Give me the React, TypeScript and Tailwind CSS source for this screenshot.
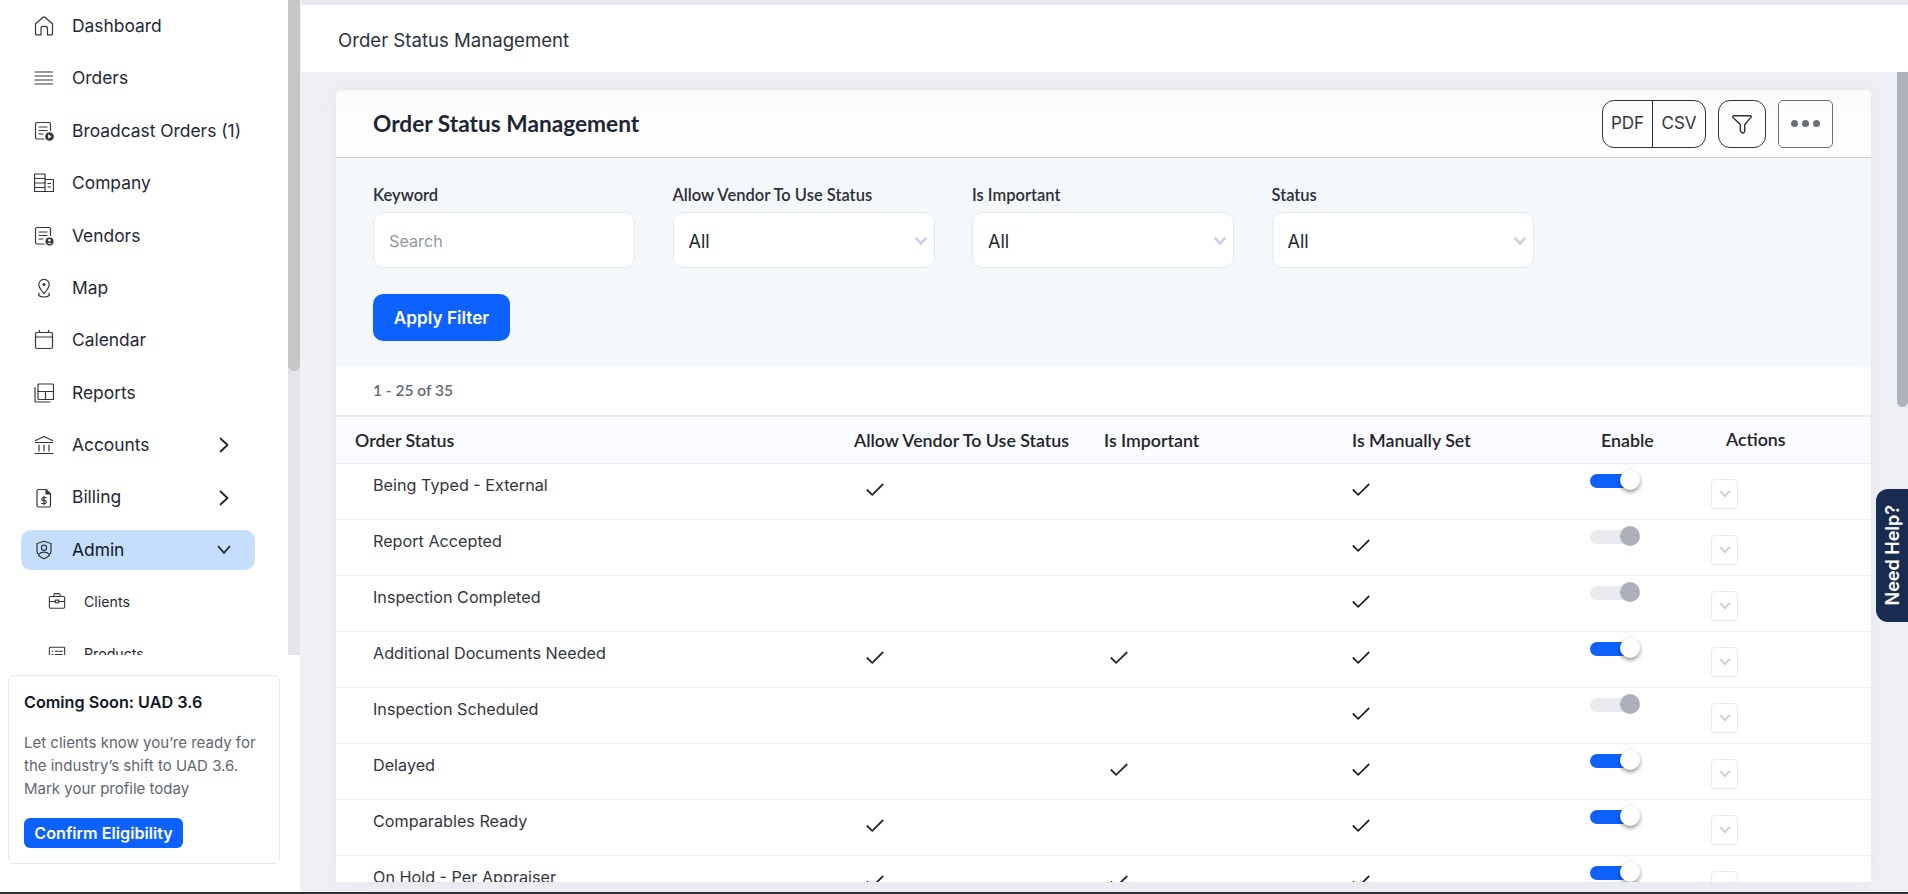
import type { ReactNode } from 'react';

const stroke = {
    fill: 'none',
    stroke: '#33363e',
    strokeWidth: 1.2,
    strokeLinecap: 'round' as const,
    strokeLinejoin: 'round' as const,
};

function NavIcon({ children, small }: { children: ReactNode; small?: boolean }) {
    return (
        <svg viewBox="0 0 20 20" className={small ? 'w-[18px] h-[18px] shrink-0' : 'w-5 h-5 shrink-0'} {...stroke}>
            {children}
        </svg>
    );
}

const icons: Record<string, ReactNode> = {
    dashboard: (
        <path d="M1.5 8 9 1.2c.6-.5 1.400-.5 2 0L18.500 8v10a.8.800 0 0 1-.8.800h-4.200v-6.300a2.200 2.200 0 0 0-2.200-2.200H9.200A2.200 2.200 0 0 0 7 12.500v6.300H2.300a.8.800 0 0 1-.8-.8z" />
    ),
    orders: <path d="M1 4h17.500M1 8h17.500M1 12h17.500M1 16h17.500" />,
    broadcast: (
        <>
            <path d="M10 18H3a1.500 1.500 0 0 1-1.500-1.500V3A1.500 1.500 0 0 1 3 1.500h12A1.500 1.500 0 0 1 16.500 3v6.500" />
            <path d="M5 6h8M5 9.500h8M5 13h4" />
            <circle cx="15.500" cy="15.500" r="4.300" fill="#33363e" stroke="none" />
            <path d="m14.200 13.300 3.400 2.200-3.400 2.200z" fill="#fff" stroke="none" />
        </>
    ),
    company: (
        <>
            <path d="M.5 1h10.500v17.500H.5zM11 6.500h8.500v12H11z" />
            <path d="M.5 5.500H11M.5 10H11M.5 14.500H11M14 10.500h2.500M14 14h2.500" />
        </>
    ),
    vendors: (
        <>
            <path d="M10 18H3a1.500 1.500 0 0 1-1.500-1.500V3A1.500 1.500 0 0 1 3 1.500h12A1.500 1.500 0 0 1 16.500 3v6.500" />
            <path d="M5 6h8M5 9.500h8M5 13h4" />
            <circle cx="15.500" cy="15.500" r="4" fill="#33363e" stroke="none" />
            <circle cx="15.500" cy="14.300" r="1.300" fill="#fff" stroke="none" />
            <path d="M13 17.800c.5-1.500 4.500-1.500 5 0z" fill="#fff" stroke="none" />
        </>
    ),
    map: (
        <>
            <path d="M10 15.500c-1.800-2.200-5.200-5.500-5.200-9a5.200 5.200 0 0 1 10.400 0c0 3.500-3.400 6.800-5.200 9z" />
            <circle cx="10" cy="6.500" r=".9" fill="#33363e" />
            <path d="M5.200 15.500c-1.600 1.500-.2 3.500 4.800 3.500s6.400-2 4.800-3.500" />
        </>
    ),
    calendar: (
        <>
            <rect x="1.500" y="2.500" width="17" height="16" rx="1.500" />
            <path d="M1.500 7h17M5.500.5v2M14.500.5v2" />
        </>
    ),
    reports: (
        <>
            <rect x="4" y="1" width="15.500" height="15.500" rx="1" />
            <path d="M4 8.500h15.500M11.500 8.500v8" />
            <path d="M1 4.500V18a1 1 0 0 0 1 1h14" />
        </>
    ),
    accounts: <path d="m1.500 5.500 8.500-4 8.500 4M1.500 7.500h17M5 10v6M10 10v6M15 10v6M1 18.500h18" />,
    billing: (
        <>
            <path d="M3 3a1.500 1.500 0 0 1 1.500-1.500h7.500l4.500 4.500v11.500a1.500 1.500 0 0 1-1.500 1.500h-10.500a1.500 1.500 0 0 1-1.500-1.500z" />
            <path d="M12 1.500V6h4.500" fill="#33363e" />
            <path d="M12.200 9.500H9.400a1.500 1.500 0 0 0 0 3h1.300a1.500 1.500 0 0 1 0 3H7.800M10 8.300v8.400" />
        </>
    ),
    admin: (
        <>
            <path d="M10 1.200 17 3.500v7c0 4-3.500 6.800-7 8.300-3.500-1.500-7-4.300-7-8.300v-7z" />
            <circle cx="10" cy="7.800" r="2.600" />
            <path d="M5 14c2.500-2.500 7.500-2.500 10 0" />
        </>
    ),
    clients: (
        <>
            <rect x="1.500" y="5" width="17" height="13" rx="1.200" />
            <path d="M6.500 5V3a1.200 1.200 0 0 1 1.200-1.200h4.600A1.200 1.200 0 0 1 13.500 3v2M1.500 10.500h6.500M12 10.500h6.500" />
            <rect x="8" y="9" width="4" height="3" />
        </>
    ),
    products: (
        <>
            <rect x="1.500" y="2.500" width="17" height="15" rx="1" />
            <path d="M4.500 7h1M8 7h8M4.500 10.500h1M8 10.500h8" />
        </>
    ),
};

const navItems = [
    { key: 'dashboard', label: 'Dashboard' },
    { key: 'orders', label: 'Orders' },
    { key: 'broadcast', label: 'Broadcast Orders (1)' },
    { key: 'company', label: 'Company' },
    { key: 'vendors', label: 'Vendors' },
    { key: 'map', label: 'Map' },
    { key: 'calendar', label: 'Calendar' },
    { key: 'reports', label: 'Reports' },
    { key: 'accounts', label: 'Accounts', arrow: true },
    { key: 'billing', label: 'Billing', arrow: true },
];

const rows = [
    { name: 'Being Typed - External', vendor: true, important: false, on: true },
    { name: 'Report Accepted', vendor: false, important: false, on: false },
    { name: 'Inspection Completed', vendor: false, important: false, on: false },
    { name: 'Additional Documents Needed', vendor: true, important: true, on: true },
    { name: 'Inspection Scheduled', vendor: false, important: false, on: false },
    { name: 'Delayed', vendor: false, important: true, on: true },
    { name: 'Comparables Ready', vendor: true, important: false, on: true },
    { name: 'On Hold - Per Appraiser', vendor: true, important: true, on: true },
];

const gridCols = 'grid grid-cols-[518px_250px_248px_238px_121px_1fr]';

function Sidebar() {
    return (
        <aside className="w-[300px] shrink-0 flex flex-col bg-white">
            <div className="h-[655px] flex overflow-hidden">
                <nav className="flex-1 pt-[6px] px-[21px] flex flex-col gap-[12.400px] overflow-hidden">
                    {navItems.map((item) => (
                        <div key={item.key} className="h-10 shrink-0 flex items-center pl-[13px] w-[234px] text-[17.400px] text-[#1f2937]">
                            <NavIcon>{icons[item.key]}</NavIcon>
                            <span className="ml-[18px] flex-1">{item.label}</span>
                            {item.arrow && (
                                <svg viewBox="0 0 10 16" className="w-[10px] h-4 mr-[26px]" fill="none" stroke="#1f2530" strokeWidth="1.800" strokeLinecap="round" strokeLinejoin="round">
                                    <path d="m1.500 1.500 7 6.500-7 6.500" />
                                </svg>
                            )}
                        </div>
                    ))}
                    <div className="h-10 shrink-0 flex items-center pl-[13px] w-[234px] text-[17.400px] text-[#111827] bg-[#c4defb] rounded-[10px]">
                        <NavIcon>{icons.admin}</NavIcon>
                        <span className="ml-[18px] flex-1">Admin</span>
                        <svg viewBox="0 0 14 10" className="w-[14px] h-[10px] mr-6" fill="none" stroke="#1f2530" strokeWidth="1.800" strokeLinecap="round" strokeLinejoin="round">
                            <path d="m1.500 1.500 5.500 6.500 5.500-6.500" />
                        </svg>
                    </div>
                    {['clients', 'products'].map((key) => (
                        <div key={key} className="h-10 shrink-0 flex items-center pl-[27px] text-[14.200px] text-[#1f2937] -translate-y-[1px]">
                            <NavIcon small>{icons[key]}</NavIcon>
                            <span className="ml-[18px] capitalize">{key}</span>
                        </div>
                    ))}
                </nav>
                <div className="w-3 shrink-0 bg-[#e5e5e8]">
                    <div className="h-[371px] bg-[#c6c6c6] rounded-b-md" />
                </div>
            </div>
            <div className="flex-1 pl-2 pr-5 pt-5">
                <div className="h-[189px] border border-[#e8e8ea] rounded-md px-[15px] pt-[14px]">
                    <h3 className="text-[16.200px] leading-6 font-semibold text-[#111827]">Coming Soon: UAD 3.6</h3>
                    <p className="mt-[17px] text-[15px] leading-[23px] text-[#5f6672]">
                        Let clients know you’re ready for the industry’s shift to UAD 3.6. Mark your profile today
                    </p>
                    <button className="mt-[18px] w-[159px] h-[30px] rounded-md bg-[#0d62ff] text-white text-[16.200px] font-semibold">
                        Confirm Eligibility
                    </button>
                </div>
            </div>
        </aside>
    );
}

function SelectField({ label }: { label: string }) {
    return (
        <div className="w-[262px]">
            <label className="block h-[23px] [font-family:Lato,sans-serif] font-semibold text-[16.500px] leading-6 text-[#2b2f36]">{label}</label>
            <div className="mt-[6px] h-[56px] flex items-center justify-between bg-white border border-[#e6e8ef] rounded-[10px] pl-[15px] pr-[6px] pt-[2px] text-[18px] text-[#23262d]">
                All
                <svg viewBox="0 0 14 10" className="w-[14px] h-[10px]" fill="none" stroke="#ccd2e3" strokeWidth="2.600">
                    <path d="m1.500 1.500 5.500 6 5.500-6" />
                </svg>
            </div>
        </div>
    );
}

function Check() {
    return (
        <svg viewBox="0 0 18 13" className="w-[18px] h-[13px]" fill="none" stroke="#26282d" strokeWidth="1.800">
            <path d="m.8 6.500 5.400 5.300L17.200 1" />
        </svg>
    );
}

function Toggle({ on }: { on: boolean }) {
    return (
        <div className={on ? 'relative w-[44px] h-[14px] mt-[10px] rounded-full bg-[#0d62ff]' : 'relative w-[44px] h-[14px] mt-[10px] rounded-full bg-[#e9eaee]'}>
            <span
                className={
                    on
                        ? 'absolute -top-[4px] left-[30px] w-5 h-5 rounded-full bg-white shadow-[0_2px_4px_rgba(0,0,0,0.45)]'
                        : 'absolute -top-[4px] left-[30px] w-5 h-5 rounded-full bg-[#adb0b8]'
                }
            />
        </div>
    );
}

function TableRow({ row }: { row: (typeof rows)[number] }) {
    return (
        <div className={`${gridCols} h-[56px] shrink-0 border-b border-[#eceef2] bg-white`}>
            <div className="pl-[37px] pt-[11px] text-[16.200px] leading-5 text-[#33363d]">{row.name}</div>
            <div className="pl-3 pt-[19px]">{row.vendor && <Check />}</div>
            <div className="pl-[6px] pt-[19px]">{row.important && <Check />}</div>
            <div className="pt-[19px]">
                <Check />
            </div>
            <div>
                <Toggle on={row.on} />
            </div>
            <div className="pt-[15px]">
                <div className="w-[27px] h-[30px] border border-[#e8eaf2] rounded-[4px] flex items-center justify-center">
                    <svg viewBox="0 0 12 8" className="w-3 h-2" fill="none" stroke="#ccd2e3" strokeWidth="2">
                        <path d="m1 1 5 5 5-5" />
                    </svg>
                </div>
            </div>
        </div>
    );
}

function Card() {
    return (
        <section className="w-[1535px] h-full rounded-t-[5px] bg-white overflow-hidden flex flex-col shadow-[0_0_24px_rgba(60,60,90,0.06)]">
            <div className="h-[68px] shrink-0 flex items-center border-b border-[#c9ccd6] pl-[37px] pr-[38px] bg-gradient-to-b from-[#fbfbfc] to-white">
                <h1 className="flex-1 mt-[2px] [font-family:Lato,sans-serif] font-bold text-[22.700px] text-[#1e2636]">Order Status Management</h1>
                <div className="flex h-12 w-[104px] border border-[#2f3136] rounded-[12px] text-[17px] text-[#33363d]">
                    <span className="w-[50px] shrink-0 flex items-center justify-center border-r border-[#2f3136]">PDF</span>
                    <span className="flex-1 flex items-center justify-center">CSV</span>
                </div>
                <div className="ml-3 w-12 h-12 border border-[#2f3136] rounded-[12px] flex items-center justify-center">
                    <svg viewBox="0 0 20 20" className="w-[22px] h-[22px]" fill="none" stroke="#2f3136" strokeWidth="1.300" strokeLinejoin="round">
                        <path d="M2.500 2.500h15c.8 0 1.200.9.7 1.500l-5.700 6.500v5.500c0 1.500-1.200 2.500-2.200 2.200-.8-.3-1.800-1.500-1.800-2.600v-5.100L1.800 4c-.5-.6-.1-1.500.7-1.500z" />
                    </svg>
                </div>
                <div className="ml-3 w-[55px] h-12 border border-[#6b6e76] rounded-[5px] flex items-center justify-center gap-1">
                    <span className="w-[7px] h-[7px] rounded-full bg-[#6b7078]" />
                    <span className="w-[7px] h-[7px] rounded-full bg-[#6b7078]" />
                    <span className="w-[7px] h-[7px] rounded-full bg-[#6b7078]" />
                </div>
            </div>

            <div className="h-[208px] shrink-0 bg-[#f5f8fb] pl-[37px] pt-[25px]">
                <div className="flex gap-[37.500px]">
                    <div className="w-[262px]">
                        <label className="block h-[23px] [font-family:Lato,sans-serif] font-semibold text-[16.500px] leading-6 text-[#2b2f36]">Keyword</label>
                        <input
                            placeholder="Search"
                            className="mt-[6px] w-full h-[56px] bg-white border border-[#e6e8ef] rounded-[10px] px-[15px] pt-[2px] text-[16.200px] placeholder:text-[#9198a3] outline-none"
                        />
                    </div>
                    <SelectField label="Allow Vendor To Use Status" />
                    <SelectField label="Is Important" />
                    <SelectField label="Status" />
                </div>
                <button className="mt-[26px] w-[137px] h-[47px] rounded-[10px] bg-[#0d62ff] text-white text-[17.200px] font-semibold">Apply Filter</button>
            </div>

            <div className="h-[49px] shrink-0 flex items-center pl-[37px] [font-family:Lato,sans-serif] font-semibold text-[15.500px] text-[#656a74]">1 - 25 of 35</div>

            <div className={`${gridCols} h-[49px] shrink-0 items-center border-t-2 border-b border-t-[#e9eaee] border-b-[#eceef2] bg-[#fafbfe] [font-family:Lato,sans-serif] font-semibold text-[17.800px] text-[#22252b]`}>
                <div className="pl-[19px]">Order Status</div>
                <div>Allow Vendor To Use Status</div>
                <div>Is Important</div>
                <div>Is Manually Set</div>
                <div className="pl-[11px]">Enable</div>
                <div className="pl-[15px] -mt-[2px]">Actions</div>
            </div>

            {rows.map((row) => (
                <TableRow key={row.name} row={row} />
            ))}
        </section>
    );
}

export default function App() {
    return (
        <div className="w-[1908px] h-[894px] overflow-hidden flex flex-col relative [font-family:Inter,sans-serif] bg-[#eff0f5]">
            <div className="flex-1 min-h-0 flex">
                <Sidebar />
                <main className="flex-1 min-w-0 flex flex-col ml-px">
                    <div className="h-[5px] shrink-0 bg-[#e8e9ee]" />
                    <header className="h-[67px] shrink-0 bg-white flex items-center pl-[37px] pt-[4px] text-[18.600px] text-[#2b3240]">Order Status Management</header>
                    <div className="flex-1 min-h-0 flex bg-[#eff0f5]">
                        <div className="flex-1 pl-[35px] pt-[18px] pb-[10px] min-h-0">
                            <Card />
                        </div>
                        <div className="w-[11px] shrink-0">
                            <div className="h-[335px] bg-[#aeb0ba] rounded-b-md" />
                        </div>
                    </div>
                </main>
            </div>
            <div className="h-[2px] shrink-0 bg-[#2f3033]" />

            {/* Need help tab */}
            <div className="absolute right-0 top-[489px] w-8 h-[133px] bg-[#1a2b52] rounded-l-[12px] flex items-center justify-center">
                <span className="[writing-mode:vertical-rl] rotate-180 text-white font-semibold text-[18px]">Need Help?</span>
            </div>
        </div>
    );
}
